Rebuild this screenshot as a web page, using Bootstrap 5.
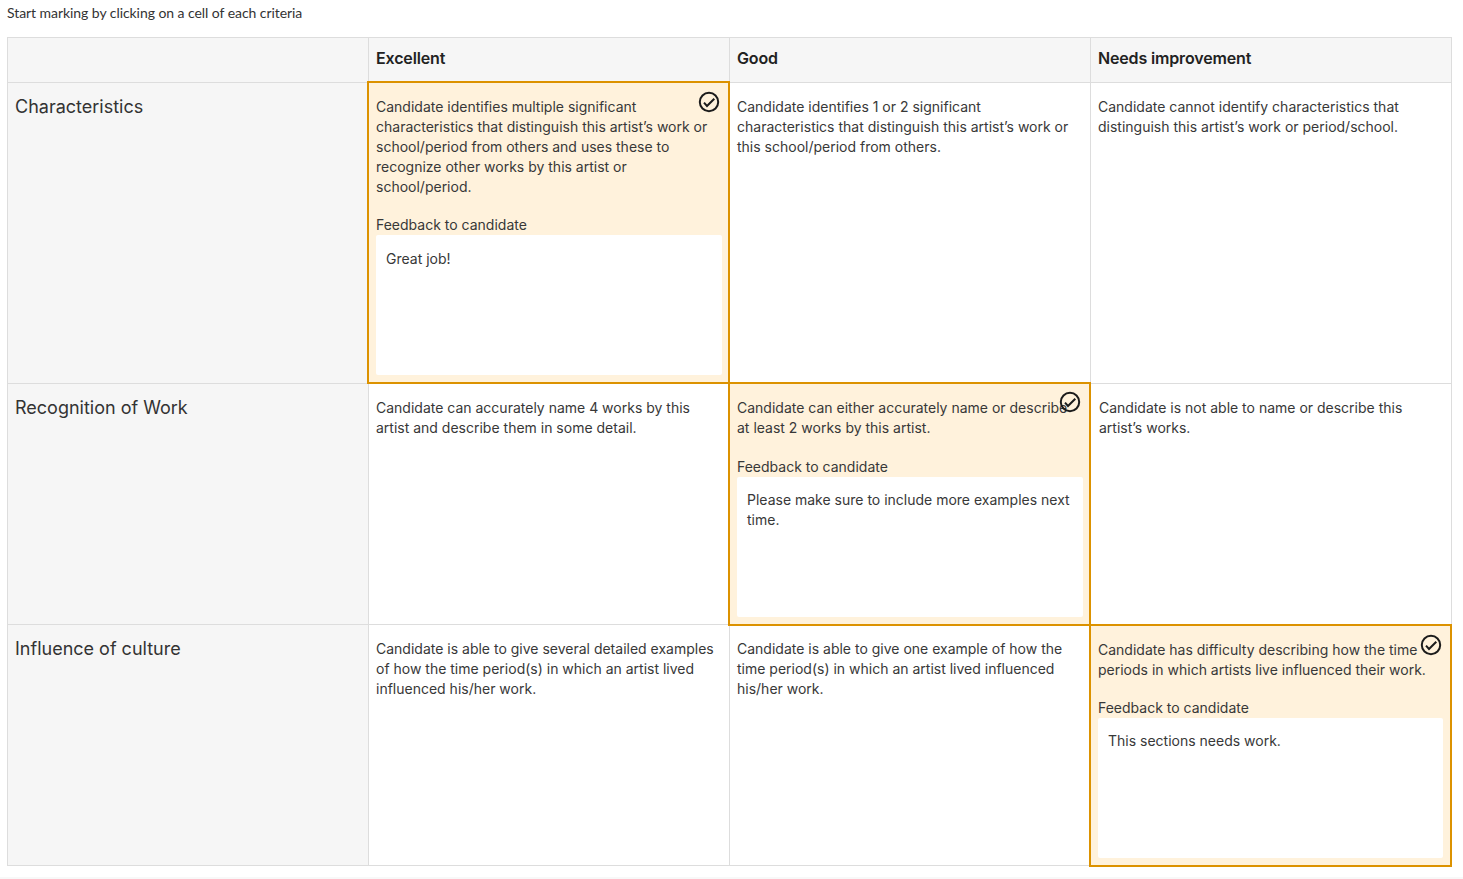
<!DOCTYPE html>
<html lang="en">
<head>
<meta charset="utf-8">
<title>Rubric</title>
<link href="https://cdn.jsdelivr.net/npm/bootstrap@5.3.0/dist/css/bootstrap.min.css" rel="stylesheet">
<style>
html,body{height:879px;overflow:hidden}
body{background:#fff;color:#383838;font-family:Inter,"Liberation Sans",sans-serif;font-size:14px;line-height:20px}
.page-wrap{padding:0 11px 0 7px}
.intro{font-family:Lato,"Liberation Sans",sans-serif;font-size:14px;line-height:20px;height:37px;padding-top:3px;color:#333;letter-spacing:-.06px}
.rubric{table-layout:fixed;width:1445px;border-collapse:separate;border-spacing:0;margin:0}
.rubric th,.rubric td{border-left:1px solid #ddd;border-top:1px solid #ddd;padding:14px 9px 0 7px;vertical-align:top;position:relative;font-weight:400}
.rubric tr>*:last-child{border-right:1px solid #ddd}
.rubric tbody tr:last-child>*{border-bottom:1px solid #ddd}
.col-std{width:361px}
.col-end{width:362px}
.rubric thead th{height:45px;background:#f6f6f6;padding-top:10px;font-size:16px;line-height:20px;font-weight:600;color:#222;letter-spacing:-.15px}
.rubric tbody th{background:#f6f6f6;font-size:18px;line-height:22px;padding-top:13px;color:#333}
.row-a{height:301px}
.row-b{height:241px}
.row-c{height:242px}
.rubric td.picked{background:#fff2dc;padding-right:7px}
.picked::after{content:"";position:absolute;border:2px solid #dc9200;left:-2px;right:-1px;z-index:2;pointer-events:none}
.row-a .picked::after{top:-2px;bottom:-1px}
.row-b .picked::after{top:-2px;bottom:-2px}
.row-c .picked::after{top:-1px;bottom:-2px}
.rubric .row-c td.picked{padding-top:15px;padding-right:8px}
.rubric td.after-pick{padding-left:8px}
.tick{position:absolute;right:9px;width:22px;height:22px;display:block;z-index:3}
.row-a .tick{top:8px}
.row-b .tick{top:7px}
.row-c .tick{top:9px}
.fb-label{margin-top:18px;line-height:20px}
.row-b .fb-label{margin-top:19px}
.fb-box{background:#fff;border-radius:2px;padding:13px 10px 0 10px;height:140px}
.row-a .fb-box{padding-top:14px}
.bottom-strip{position:fixed;left:0;right:0;bottom:0;height:2px;background:#f8f8f8}
</style>
</head>
<body>
<div class="page-wrap">
<p class="intro mb-0">Start marking by clicking on a cell of each criteria</p>
<table class="rubric">
<colgroup><col class="col-std"><col class="col-std"><col class="col-std"><col class="col-end"></colgroup>
<thead>
<tr><th></th><th>Excellent</th><th>Good</th><th>Needs improvement</th></tr>
</thead>
<tbody>
<tr class="row-a">
<th scope="row">Characteristics</th>
<td class="picked">
<svg class="tick" viewBox="0 0 22 22" fill="none" stroke="#1c1c1c"><circle cx="11" cy="11" r="9.2" stroke-width="2"/><path d="M6 11.7L9 15l7.3-7.3" stroke-width="2"/></svg>
Candidate identifies multiple significant characteristics that distinguish this artist’s work or school/period from others and uses these to recognize other works by this artist or school/period.
<div class="fb-label">Feedback to candidate</div>
<div class="fb-box">Great job!</div>
</td>
<td>Candidate identifies 1 or 2 significant characteristics that distinguish this artist’s work or this school/period from others.</td>
<td>Candidate cannot identify characteristics that distinguish this artist’s work or period/school.</td>
</tr>
<tr class="row-b">
<th scope="row">Recognition of Work</th>
<td>Candidate can accurately name 4 works by this artist and describe them in some detail.</td>
<td class="picked">
<svg class="tick" viewBox="0 0 22 22" fill="none" stroke="#1c1c1c"><circle cx="11" cy="11" r="9.2" stroke-width="2"/><path d="M6 11.7L9 15l7.3-7.3" stroke-width="2"/></svg>
Candidate can either accurately name or describe at least 2 works by this artist.
<div class="fb-label">Feedback to candidate</div>
<div class="fb-box">Please make sure to include more examples next time.</div>
</td>
<td class="after-pick">Candidate is not able to name or describe this artist’s works.</td>
</tr>
<tr class="row-c">
<th scope="row">Influence of culture</th>
<td>Candidate is able to give several detailed examples of how the time period(s) in which an artist lived influenced his/her work.</td>
<td>Candidate is able to give one example of how the time period(s) in which an artist lived influenced his/her work.</td>
<td class="picked">
<svg class="tick" viewBox="0 0 22 22" fill="none" stroke="#1c1c1c"><circle cx="11" cy="11" r="9.2" stroke-width="2"/><path d="M6 11.7L9 15l7.3-7.3" stroke-width="2"/></svg>
Candidate has difficulty describing how the time periods in which artists live influenced their work.
<div class="fb-label">Feedback to candidate</div>
<div class="fb-box">This sections needs work.</div>
</td>
</tr>
</tbody>
</table>
</div>
<div class="bottom-strip"></div>
<script src="https://cdn.jsdelivr.net/npm/bootstrap@5.3.0/dist/js/bootstrap.bundle.min.js"></script>
</body>
</html>
